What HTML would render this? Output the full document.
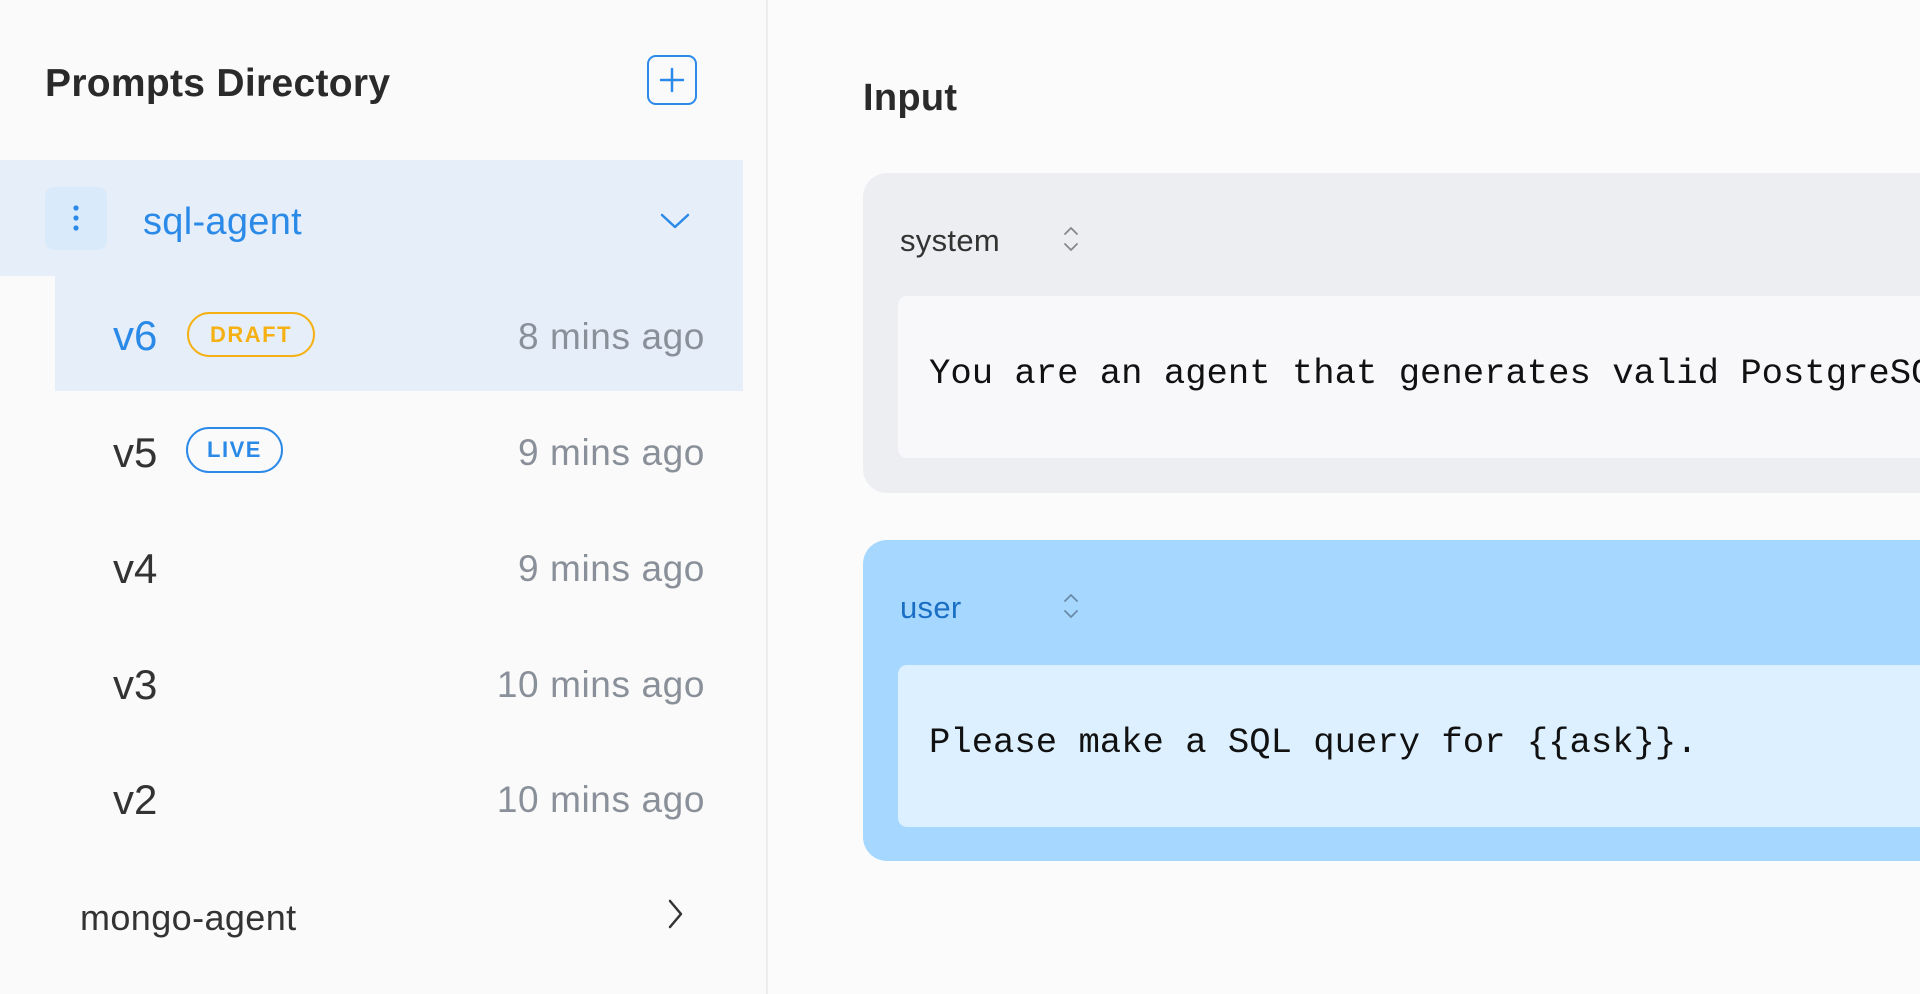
<!DOCTYPE html>
<html><head><meta charset="utf-8"><style>
*{margin:0;padding:0;box-sizing:border-box}
body{width:1920px;height:994px;overflow:hidden;background:#fbfbfb;font-family:"Liberation Sans",sans-serif;position:relative}
.side{position:absolute;left:0;top:0;width:768px;height:994px;background:#fafafa;border-right:2px solid #ececec}
.a{position:absolute}
.title{left:45px;top:62px;font-size:39px;font-weight:bold;color:#2a2a2a;letter-spacing:0.3px}
.plus{left:647px;top:55px;width:50px;height:50px;border:2px solid #2b8ae8;border-radius:9px}
.hl{background:#e6eff9}
.v{font-size:42px;color:#333;left:113px}
.t{font-size:37px;color:#8a9099;right:61px;text-align:right;letter-spacing:0.6px}
.badge{border:2.5px solid;border-radius:24px;font-size:22px;font-weight:bold;letter-spacing:1.5px;display:flex;align-items:center;justify-content:center}
.card{position:absolute;left:863px;right:-40px;border-radius:24px}
.inner{position:absolute;left:35px;right:0;border-radius:9px}
.mono{font-family:"Liberation Mono",monospace;font-size:35.6px;color:#111;position:absolute;left:31px;top:50%;transform:translateY(-58%);white-space:nowrap}
.role{position:absolute;left:37px;font-size:31px;letter-spacing:0.3px}
</style></head><body>
<div class="side">
  <div class="a title">Prompts Directory</div>
  <div class="a plus"><svg width="46" height="46" viewBox="0 0 46 46"><path d="M23 12v22M12 23h22" stroke="#2b8ae8" stroke-width="2.5" stroke-linecap="round"/></svg></div>
  <div class="a hl" style="left:0;top:160px;width:743px;height:116px"></div>
  <div class="a hl" style="left:55px;top:276px;width:688px;height:115px"></div>
  <div class="a" style="left:45px;top:187px;width:62px;height:63px;background:#d9eafa;border-radius:9px"><svg width="62" height="63"><circle cx="31" cy="21" r="2.6" fill="#2b8ae8"/><circle cx="31" cy="31" r="2.6" fill="#2b8ae8"/><circle cx="31" cy="41" r="2.6" fill="#2b8ae8"/></svg></div>
  <div class="a" style="left:143px;top:201px;font-size:38px;color:#2b8ae8;letter-spacing:0.3px">sql-agent</div>
  <svg class="a" style="left:659px;top:210px" width="32" height="22"><path d="M3 5l13 12 13-12" fill="none" stroke="#2b8ae8" stroke-width="2.5" stroke-linecap="round" stroke-linejoin="round"/></svg>

  <div class="a v" style="top:312px;color:#2b8ae8">v6</div>
  <div class="a badge" style="left:187px;top:312px;width:128px;height:45px;color:#f5b014;border-color:#f5b014">DRAFT</div>
  <div class="a t" style="top:316px">8 mins ago</div>

  <div class="a v" style="top:429px">v5</div>
  <div class="a badge" style="left:186px;top:427px;width:97px;height:46px;color:#2b8ae8;border-color:#2b8ae8">LIVE</div>
  <div class="a t" style="top:432px">9 mins ago</div>

  <div class="a v" style="top:545px">v4</div>
  <div class="a t" style="top:548px">9 mins ago</div>
  <div class="a v" style="top:661px">v3</div>
  <div class="a t" style="top:664px">10 mins ago</div>
  <div class="a v" style="top:776px">v2</div>
  <div class="a t" style="top:779px">10 mins ago</div>

  <div class="a" style="left:80px;top:897px;font-size:36px;color:#333;letter-spacing:0.4px">mongo-agent</div>
  <svg class="a" style="left:664px;top:898px" width="22" height="32"><path d="M6 3l11 13-11 13" fill="none" stroke="#333" stroke-width="2.5" stroke-linecap="round" stroke-linejoin="round"/></svg>
</div>

<div class="a" style="left:863px;top:77px;font-size:38px;font-weight:bold;color:#2a2a2a;letter-spacing:0.3px">Input</div>

<div class="card" style="top:173px;height:320px;background:#edeef1">
  <div class="role" style="top:50px;color:#333">system</div>
  <svg class="a" style="left:200px;top:52px" width="16" height="28"><path d="M2 9l6-6 6 6M2 19l6 6 6-6" fill="none" stroke="#888" stroke-width="1.8" stroke-linecap="round" stroke-linejoin="round"/></svg>
  <div class="inner" style="top:123px;height:162px;background:#f8f8fa"><div class="mono">You are an agent that generates valid PostgreSQL</div></div>
</div>

<div class="card" style="top:540px;height:321px;background:#a6d8ff">
  <div class="role" style="top:50px;color:#1a6fc4">user</div>
  <svg class="a" style="left:200px;top:52px" width="16" height="28"><path d="M2 9l6-6 6 6M2 19l6 6 6-6" fill="none" stroke="#6a8aa8" stroke-width="1.8" stroke-linecap="round" stroke-linejoin="round"/></svg>
  <div class="inner" style="top:125px;height:162px;background:#dcf0ff"><div class="mono">Please make a SQL query for {{ask}}.</div></div>
</div>
</body></html>
